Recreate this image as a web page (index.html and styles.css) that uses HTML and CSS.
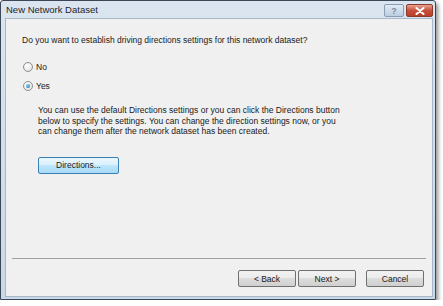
FILE: index.html
```html
<!DOCTYPE html>
<html lang="en">
<head>
  <meta charset="UTF-8" />
  <title>New Network Dataset</title>
  <link rel="stylesheet" href="styles.css">
</head>
<body>
  <div class="window">
    <div class="titlebar">
      <span class="title">New Network Dataset</span>
      <div class="caption-buttons">
        <div class="cap-btn help">?</div>
        <div class="cap-btn close">
          <svg width="10" height="8" viewBox="0 0 10 8">
            <path d="M1.5 1 L8.5 7 M8.5 1 L1.5 7" stroke="#fff" stroke-width="2" stroke-linecap="round"/>
          </svg>
        </div>
      </div>
    </div>
    <div class="client">
      <div class="content">
        <p class="question">Do you want to establish driving directions settings for this network dataset?</p>
        <label class="radio-row"><span class="radio"></span>No</label>
        <label class="radio-row"><span class="radio checked"></span>Yes</label>
        <p class="info">You can use the default Directions settings or you can click the Directions button<br>below to specify the settings. You can change the direction settings now, or you<br>can change them after the network dataset has been created.</p>
        <button class="btn default">Directions...</button>
      </div>
      <div class="footer">
        <button class="btn">&lt; Back</button>
        <button class="btn next">Next &gt;</button>
        <button class="btn cancel">Cancel</button>
      </div>
    </div>
  </div>
</body>
</html>
```

FILE: styles.css
```css
body {
  margin: 0;
  background: #fff;
  font-family: "Liberation Sans", Arial, sans-serif;
}
.window {
  width: 434px;
  height: 298px;
  border: 1px solid #3b4656;
  border-radius: 3px 3px 0 0;
  background: linear-gradient(to bottom, #dae5f0, #c8d9ea);
  box-shadow: 2px 3px 4px rgba(0,0,0,0.45);
  display: flex;
  flex-direction: column;
}
.titlebar {
  height: 17px;
  display: flex;
  align-items: center;
  justify-content: space-between;
  padding-left: 5px;
}
.title {
  font-size: 9.5px;
  color: #1f1f1f;
}
.caption-buttons {
  display: flex;
  gap: 2px;
  margin-right: 2px;
  margin-top: 3px;
  align-self: flex-start;
}
.cap-btn {
  height: 11px;
  border-radius: 2px;
  display: flex;
  align-items: center;
  justify-content: center;
}
.help {
  width: 18px;
  border: 1px solid #8a9db2;
  background: linear-gradient(to bottom, #e3ebf4, #bccde0);
  color: #7d8a98;
  font-size: 9px;
  font-weight: bold;
}
.close {
  width: 25px;
  border: 1px solid #8d3a2e;
  background: linear-gradient(to bottom, #e8a493, #c7503a 50%, #b8402c);
}
.client {
  flex: 1;
  margin: 0 2px 2px 4px;
  background: #f0f0f0;
  border: 1px solid #a9b8c8;
  display: flex;
  flex-direction: column;
  font-size: 8.5px;
  color: #1a1a1a;
}
.content {
  flex: 1;
  padding: 0 16px;
}
.question {
  margin: 16px 0 17px;
}
.radio-row {
  display: flex;
  align-items: center;
  gap: 3px;
  height: 10px;
  margin: 0 0 9px 1px;
}
.radio {
  width: 8px;
  height: 8px;
  border-radius: 50%;
  border: 1px solid #8e8f8f;
  background: radial-gradient(circle at 40% 35%, #fff, #dcdcdc);
  position: relative;
}
.radio.checked::after {
  content: "";
  position: absolute;
  left: 2px;
  top: 2px;
  width: 4px;
  height: 4px;
  border-radius: 50%;
  background: radial-gradient(circle at 40% 35%, #8fd0f6, #1d5f98);
}
.info {
  margin: 14px 0 20px 16px;
  line-height: 10.5px;
}
.btn {
  font-family: "Liberation Sans", Arial, sans-serif;
  font-size: 8.5px;
  color: #1a1a1a;
  width: 58px;
  height: 17px;
  padding: 0;
  border: 1px solid #707070;
  border-radius: 2px;
  background: linear-gradient(to bottom, #f2f2f2 0%, #ebebeb 50%, #dddddd 50%, #cfcfcf 100%);
}
.btn.default {
  width: 81px;
  margin-left: 16px;
  border-color: #3c7fb1;
  background: linear-gradient(to bottom, #eaf6fd 0%, #d9f0fc 50%, #bee6fd 50%, #a7d9f5 100%);
}
.footer {
  margin: 0 6px;
  border-top: 1px solid #a0a0a0;
  display: flex;
  justify-content: flex-end;
  padding: 11px 2px 9px;
}
.next {
  margin-left: 2px;
}
.cancel {
  margin-left: 10px;
}
```
